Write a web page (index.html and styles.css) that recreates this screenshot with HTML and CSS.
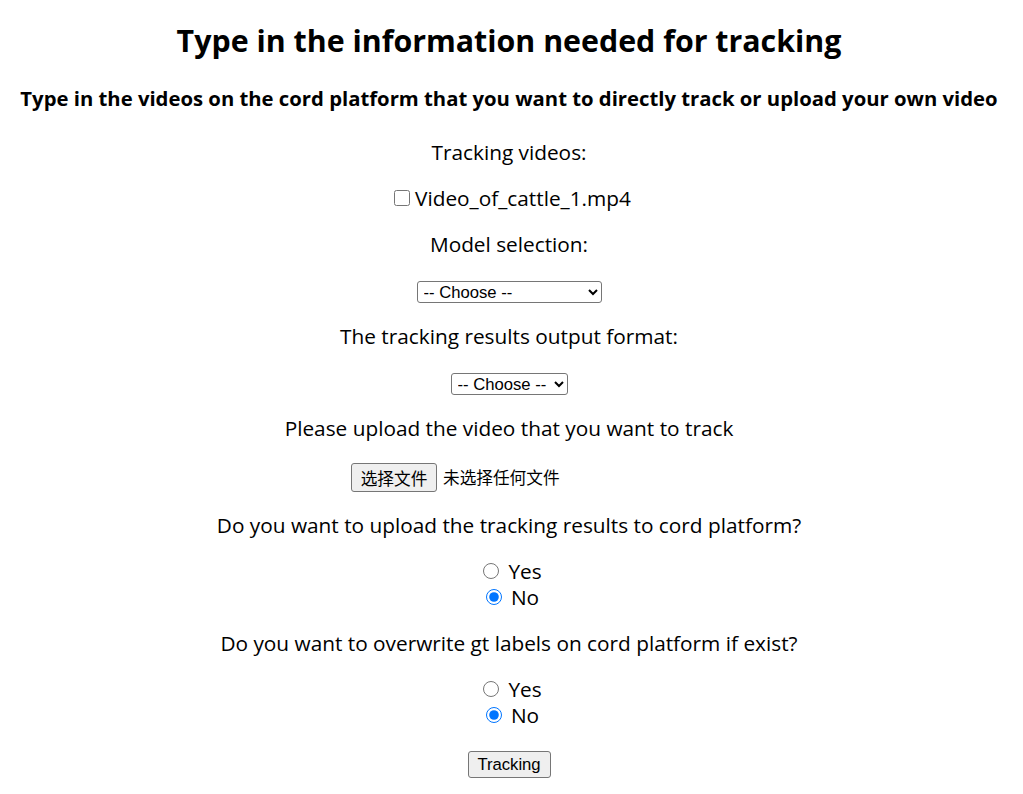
FILE: index.html
```html
<!DOCTYPE html>
<html lang="en">
<head>
<meta charset="utf-8">
<title>Tracking</title>
<link rel="stylesheet" href="styles.css">
</head>
<body>
<h1 class="title">Type in the information needed for tracking</h1>
<h2 class="subtitle">Type in the videos on the cord platform that you want to directly track or upload your own video</h2>
<form class="form">
  <p class="row first">Tracking videos:</p>
  <p class="row"><label class="check"><input type="checkbox" class="box">Video_of_cattle_1.mp4</label></p>
  <p class="row">Model selection:</p>
  <div class="row ctl"><select class="sel sel-model"><option>-- Choose --</option><option>YOLOv5 + DeepSORT tracker</option></select></div>
  <p class="row">The tracking results output format:</p>
  <div class="row ctl"><select class="sel sel-format"><option>-- Choose --</option><option>MOT</option></select></div>
  <p class="row">Please upload the video that you want to track</p>
  <div class="row ctl file-row">
    <div class="file">
      <span class="file-btn">选择文件</span>
      <span class="file-txt">未选择任何文件</span>
    </div>
  </div>
  <p class="row">Do you want to upload the tracking results to cord platform?</p>
  <div class="row radios">
    <label class="radio"><input type="radio" name="up" class="rb">Yes</label>
    <label class="radio"><input type="radio" name="up" class="rb" checked>No</label>
  </div>
  <p class="row">Do you want to overwrite gt labels on cord platform if exist?</p>
  <div class="row radios">
    <label class="radio"><input type="radio" name="ow" class="rb">Yes</label>
    <label class="radio"><input type="radio" name="ow" class="rb" checked>No</label>
  </div>
  <div class="row ctl btn-row"><button type="button" class="submit">Tracking</button></div>
</form>
</body>
</html>
```
FILE: styles.css
```css
html, body {
  background: #fff;
}
body {
  margin: 8px;
  padding-right: 5px;
  font-family: "Open Sans", "Noto Sans", sans-serif;
  color: #000;
  text-align: center;
}
.title {
  font-size: 30.35px;
  line-height: 40px;
  margin: 13px 0 0;
  font-weight: 700;
}
.subtitle {
  font-size: 20.3px;
  line-height: 26px;
  margin: 24px 0 0;
  font-weight: 700;
}
.form {
  margin: 0;
  font-size: 20.8px;
}
.row {
  margin: 20px 0 0;
  line-height: 26px;
}
.row.first {
  margin-top: 28px;
}
.check {
  display: inline-flex;
  align-items: center;
  margin-left: 7px;
}
.box {
  width: 16px;
  height: 16px;
  margin: 0 5px 0 0;
}
.ctl {
  display: flex;
  justify-content: center;
  align-items: flex-start;
  height: 26px;
}
.sel {
  font-family: Arial, "Liberation Sans", sans-serif;
  font-size: 16.67px;
  height: 22px;
  margin: 4px 0 0;
  padding: 0 0 0 2px;
  border: 1px solid #767676;
  border-radius: 3px;
  background: #fff;
  color: #000;
}
.sel-model { width: 185px; }
.sel-format { width: 117px; }
.file-row {
  height: 31px;
}
.file {
  width: 316px;
  margin: 2px 0 0;
  display: flex;
  align-items: center;
  gap: 6px;
  text-align: left;
}
.file-btn {
  box-sizing: border-box;
  width: 86px;
  height: 29px;
  display: flex;
  align-items: center;
  justify-content: center;
  font-family: "Noto Sans CJK SC", sans-serif;
  font-size: 16.67px;
  border: 1px solid #767676;
  border-radius: 3px;
  background: #efefef;
  color: #000;
}
.file-txt {
  font-family: "Noto Sans CJK SC", sans-serif;
  font-size: 16.67px;
  line-height: 29px;
}
.radios {
  display: flex;
  flex-direction: column;
  align-items: center;
}
.radio {
  display: flex;
  align-items: center;
  height: 26px;
  margin-left: 7px;
}
.rb {
  width: 16px;
  height: 16px;
  margin: 0 9px 0 0;
}
.btn-row {
  height: 30px;
}
.submit {
  box-sizing: border-box;
  font-family: Arial, "Liberation Sans", sans-serif;
  font-size: 16.67px;
  width: 83px;
  height: 27px;
  margin: 3px 0 0;
  padding: 0;
  border: 1px solid #767676;
  border-radius: 3px;
  background: #efefef;
  color: #000;
}
```
